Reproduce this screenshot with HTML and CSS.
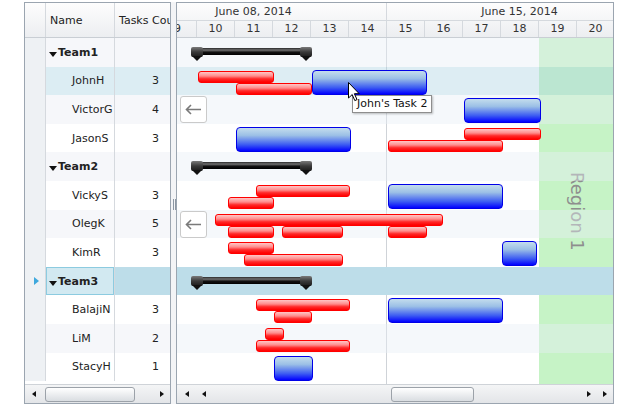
FILE: index.html
```html
<!DOCTYPE html>
<html lang="en">
<head>
    <meta charset="UTF-8">
    <title>Team Tasks Gantt</title>
    <link rel="stylesheet" href="styles.css">
</head>
<body>

    <div class="gantt">
        <div class="grid">
            <div class="grid-head">
                <div class="cell col-rh"></div>
                <div class="cell col-name">Name</div>
                <div class="cell col-count">Tasks Count</div>
            </div>
            <div class="grid-body" id="gridBody"></div>
            <div class="hscroll">
                <div class="sb-btn w17"><i class="arr-l"></i></div>
                <div class="sb-track"><div class="thumb" style="margin-left:3px;width:90px"></div></div>
                <div class="sb-btn w17"><i class="arr-r"></i></div>
            </div>
        </div>

        <div class="splitter"><span class="grip"></span></div>

        <div class="chart">
            <div class="chart-head">
                <div class="weeks">
                    <div class="week">June 08, 2014</div>
                    <div class="week">June 15, 2014</div>
                </div>
                <div class="days" id="days"></div>
            </div>
            <div class="chart-body" id="chartBody">
                <div class="region"><span>Region 1</span></div>
                <div class="week-line"></div>
                <div id="chartRows"></div>
                <div class="tip">John's Task 2</div>
                <svg class="pointer" width="13" height="20" viewBox="0 0 13 20">
                    <path d="M0.5 0.5 L0.5 16 L4.2 12.6 L6.8 18.6 L9 17.6 L6.4 11.7 L11.2 11.7 Z" fill="#fff" stroke="#000" stroke-width="1" stroke-linejoin="round"/>
                </svg>
            </div>
            <div class="hscroll">
                <div class="sb-btn w19"><i class="arr-l"></i></div>
                <div class="sb-btn w15"><i class="arr-l"></i></div>
                <div class="sb-track"><div class="thumb" style="margin-left:180px;width:83px"></div></div>
                <div class="sb-btn w15"><i class="arr-r"></i></div>
                <div class="sb-btn w17"><i class="arr-r"></i></div>
            </div>
        </div>
    </div>

    <script>
        // bars: [kind, left, width, lane]  kind r = task, b = milestone block; lane 0 top, 1 bottom, none = full
        const rows = [
            { name: "Team1", team: true },
            { name: "JohnH", count: 3, hover: true, bars: [["r", 21, 76, 0], ["r", 59, 76, 1], ["b", 135, 115]] },
            { name: "VictorG", count: 4, back: true, bars: [["b", 287, 77]] },
            { name: "JasonS", count: 3, bars: [["b", 59, 115], ["r", 287, 77, 0], ["r", 211, 115, 1]] },
            { name: "Team2", team: true },
            { name: "VickyS", count: 3, bars: [["r", 79, 94, 0], ["r", 51, 46, 1], ["b", 211, 115]] },
            { name: "OlegK", count: 5, back: true, bars: [["r", 38, 228, 0], ["r", 51, 46, 1], ["r", 105, 61, 1], ["r", 211, 39, 1]] },
            { name: "KimR", count: 3, bars: [["r", 51, 46, 0], ["r", 67, 99, 1], ["b", 325, 35]] },
            { name: "Team3", team: true, selected: true },
            { name: "BalajiN", count: 3, bars: [["r", 79, 94, 0], ["r", 97, 38, 1], ["b", 211, 115]] },
            { name: "LiM", count: 2, bars: [["r", 88, 19, 0], ["r", 79, 94, 1]] },
            { name: "StacyH", count: 1, bars: [["b", 97, 39]] }
        ];

        const days = document.getElementById("days");
        for (let d = 9; d <= 20; d++) {
            days.insertAdjacentHTML("beforeend", `<div class="day">${d}</div>`);
        }

        const gridBody = document.getElementById("gridBody");
        const chartRows = document.getElementById("chartRows");
        const backArrow = '<svg width="17" height="11" viewBox="0 0 17 11"><path d="M1.5 5.5 H16 M6 1 L1.5 5.5 L6 10" fill="none" stroke="#7a7a7a" stroke-width="1.6"/></svg>';

        rows.forEach((row, i) => {
            let cls = "";
            if (row.selected) cls = "selected";
            else if (row.hover) cls = "hover";
            else if (i % 2 === 0) cls = "alt";

            const nameCell = row.team
                ? `<div class="nm team"><i class="caret"></i>${row.name}</div>`
                : `<div class="nm">${row.name}</div>`;
            gridBody.insertAdjacentHTML("beforeend",
                `<div class="grow ${cls}">
                    <div class="rh">${row.selected ? '<i class="current"></i>' : ""}</div>
                    ${nameCell}
                    <div class="ct">${row.count || ""}</div>
                </div>`);

            let html = "";
            if (row.team) {
                html += '<div class="summary" style="left:14px;width:121px"><span class="cap cap-l"></span><span class="cap cap-r"></span></div>';
            }
            (row.bars || []).forEach(([kind, left, width, lane]) => {
                const laneCls = lane === undefined ? "full" : (lane === 0 ? "top" : "bottom");
                html += `<div class="bar ${kind === "r" ? "task" : "block"} ${laneCls}" style="left:${left}px;width:${width}px"></div>`;
            });
            if (row.back) {
                html += `<div class="back">${backArrow}</div>`;
            }
            chartRows.insertAdjacentHTML("beforeend", `<div class="crow ${cls}">${html}</div>`);
        });
    </script>

</body>
</html>
```

FILE: styles.css
```css
* {
    box-sizing: border-box;
}
body {
    margin: 0;
    font-family: "DejaVu Sans", Verdana, sans-serif;
    font-size: 11px;
    color: #222;
    background: #fff;
}
.gantt {
    display: flex;
    margin: 2px 0 0 24px;
    width: 590px;
    height: 402px;
}

/* left grid */
.grid {
    width: 147px;
    display: flex;
    flex-direction: column;
    border: 1px solid #9ba5b0;
    background: #fff;
}
.grid-head {
    display: flex;
    height: 35px;
    flex: none;
    border-bottom: 1px solid #c9ced4;
    background: linear-gradient(#fdfdfd, #eceef1);
}
.grid-head .cell {
    display: flex;
    align-items: center;
    padding-left: 4px;
    border-right: 1px solid #d5d9de;
    overflow: hidden;
    white-space: nowrap;
}
.col-rh {
    width: 21px;
    flex: none;
}
.col-name {
    width: 69px;
    flex: none;
}
.col-count {
    flex: 1;
    min-width: 0;
    border-right: none !important;
}
.grid-body {
    flex: 1;
    overflow: hidden;
}
.grow {
    display: flex;
    height: 28.6px;
}
.grow .rh {
    width: 21px;
    flex: none;
    background: #eef1f4;
    border-right: 1px solid #d5d9de;
    display: flex;
    align-items: center;
    justify-content: center;
}
.grow .nm {
    width: 69px;
    flex: none;
    display: flex;
    align-items: center;
    padding-left: 26px;
    border-right: 1px solid #d5d9de;
    white-space: nowrap;
}
.grow .nm.team {
    padding-left: 3px;
    font-weight: bold;
}
.grow .ct {
    flex: 1;
    display: flex;
    align-items: center;
    justify-content: flex-end;
    padding-right: 11px;
}
.caret {
    display: inline-block;
    border-left: 4px solid transparent;
    border-right: 4px solid transparent;
    border-top: 5px solid #111;
    margin: 4px 1px 0 0;
}
.current {
    display: block;
    border-left: 5px solid #3ea8dd;
    border-top: 4px solid transparent;
    border-bottom: 4px solid transparent;
    margin-left: 2px;
}
.grow.alt .nm,
.grow.alt .ct {
    background: #f6f7fa;
}
.grow.hover .nm,
.grow.hover .ct {
    background: #dcedf3;
}
.grow.selected .ct {
    background: #bddde9;
}
.grow.selected .nm {
    background: #d2e9f1;
    box-shadow: inset 0 0 0 1px #8ccbe0;
}

/* splitter */
.splitter {
    width: 5px;
    flex: none;
    background: #f3f4f6;
    display: flex;
    align-items: center;
    justify-content: flex-end;
    padding-right: 0;
}
.grip {
    width: 3px;
    height: 11px;
    border-left: 1px solid #8c97a3;
    border-right: 1px solid #8c97a3;
    margin-top: 2px;
}

/* chart */
.chart {
    width: 438px;
    flex: none;
    display: flex;
    flex-direction: column;
    border: 1px solid #9ba5b0;
    background: #fff;
}
.chart-head {
    height: 35px;
    flex: none;
    overflow: hidden;
    border-bottom: 1px solid #c9ced4;
    background: linear-gradient(#fdfdfd, #eceef1);
    color: #333;
}
.weeks {
    display: flex;
    height: 18px;
    margin-left: -56px;
    border-bottom: 1px solid #d5d9de;
}
.week {
    width: 266px;
    flex: none;
    text-align: center;
    line-height: 17px;
    border-right: 1px solid #d5d9de;
}
.days {
    display: flex;
    height: 16px;
    margin-left: -18px;
}
.day {
    width: 38px;
    flex: none;
    text-align: center;
    line-height: 16px;
    border-right: 1px solid #d5d9de;
}
.chart-body {
    flex: 1;
    position: relative;
    overflow: hidden;
}
.region {
    position: absolute;
    left: 362px;
    top: 0;
    right: 0;
    bottom: 0;
    background: #c6f3c6;
    display: flex;
    align-items: center;
    justify-content: center;
}
.region span {
    writing-mode: vertical-rl;
    font-size: 18px;
    color: #8e8e8e;
    margin-left: 2px;
}
.week-line {
    position: absolute;
    left: 209px;
    top: 0;
    bottom: 0;
    width: 1px;
    background: #cfd3d8;
}
.crow {
    position: relative;
    height: 28.6px;
}
.crow.alt {
    background: rgba(232, 238, 246, 0.42);
}
.crow.hover {
    background: rgba(170, 210, 225, 0.4);
}
.crow.selected {
    background: #bddde9;
}

/* task bars */
.bar {
    position: absolute;
}
.bar.top {
    top: 4px;
    height: 12px;
}
.bar.bottom {
    top: 16px;
    height: 12px;
}
.bar.full {
    top: 3px;
    height: 25px;
}
.bar.task {
    border: 1px solid #f00;
    border-radius: 3px;
    background: linear-gradient(#ffc6c6 0%, #ff8c8c 40%, #ff2a2a 68%, #ff0000 100%);
}
.bar.block {
    border: 1px solid #0000e8;
    border-radius: 4px;
    background: linear-gradient(#c4dded 0%, #9cc0e6 32%, #3d5cf2 72%, #0000ff 100%);
}
.summary {
    position: absolute;
    top: 9px;
    height: 10px;
}
.summary::before {
    content: "";
    position: absolute;
    left: 6px;
    right: 6px;
    top: 1px;
    height: 7px;
    background: linear-gradient(#2a2a2a, #707070 30%, #111 60%, #000);
}
.cap {
    position: absolute;
    top: 0;
    width: 12px;
    height: 10px;
    border-radius: 2px;
    background: linear-gradient(#7a7a7a, #3a3a3a 50%, #1a1a1a);
}
.cap::after {
    content: "";
    position: absolute;
    left: 1px;
    top: 9px;
    border-left: 5px solid transparent;
    border-right: 5px solid transparent;
    border-top: 5px solid #111;
}
.cap-l {
    left: 0;
}
.cap-r {
    right: 0;
}
.back {
    position: absolute;
    left: 3px;
    top: 1px;
    width: 27px;
    height: 27px;
    background: #fff;
    border: 1px solid #cacaca;
    border-radius: 3px;
    display: flex;
    align-items: center;
    justify-content: center;
}
.tip {
    position: absolute;
    left: 175px;
    top: 57px;
    padding: 1px 4px;
    line-height: 14px;
    background: #fff;
    border: 1px solid #8e8e8e;
    box-shadow: 1px 1px 2px rgba(0, 0, 0, 0.25);
    white-space: nowrap;
    color: #111;
}
.pointer {
    position: absolute;
    left: 171px;
    top: 44px;
}

/* scrollbars */
.hscroll {
    height: 19px;
    flex: none;
    display: flex;
    align-items: center;
    border-top: 1px solid #cfd3d8;
    background: linear-gradient(#f4f5f6, #e3e5e8);
}
.sb-btn {
    height: 18px;
    flex: none;
    display: flex;
    align-items: center;
    justify-content: center;
}
.w15 { width: 15px; }
.w17 { width: 17px; }
.w19 { width: 19px; }
.sb-track {
    flex: 1;
    height: 18px;
    display: flex;
    align-items: center;
}
.thumb {
    height: 15px;
    flex: none;
    border: 1px solid #9ca2a9;
    border-radius: 3px;
    background: linear-gradient(#ffffff, #eceef0 50%, #d9dde1);
}
.arr-l {
    border-right: 4px solid #111;
    border-top: 3.5px solid transparent;
    border-bottom: 3.5px solid transparent;
}
.arr-r {
    border-left: 4px solid #111;
    border-top: 3.5px solid transparent;
    border-bottom: 3.5px solid transparent;
}
```
